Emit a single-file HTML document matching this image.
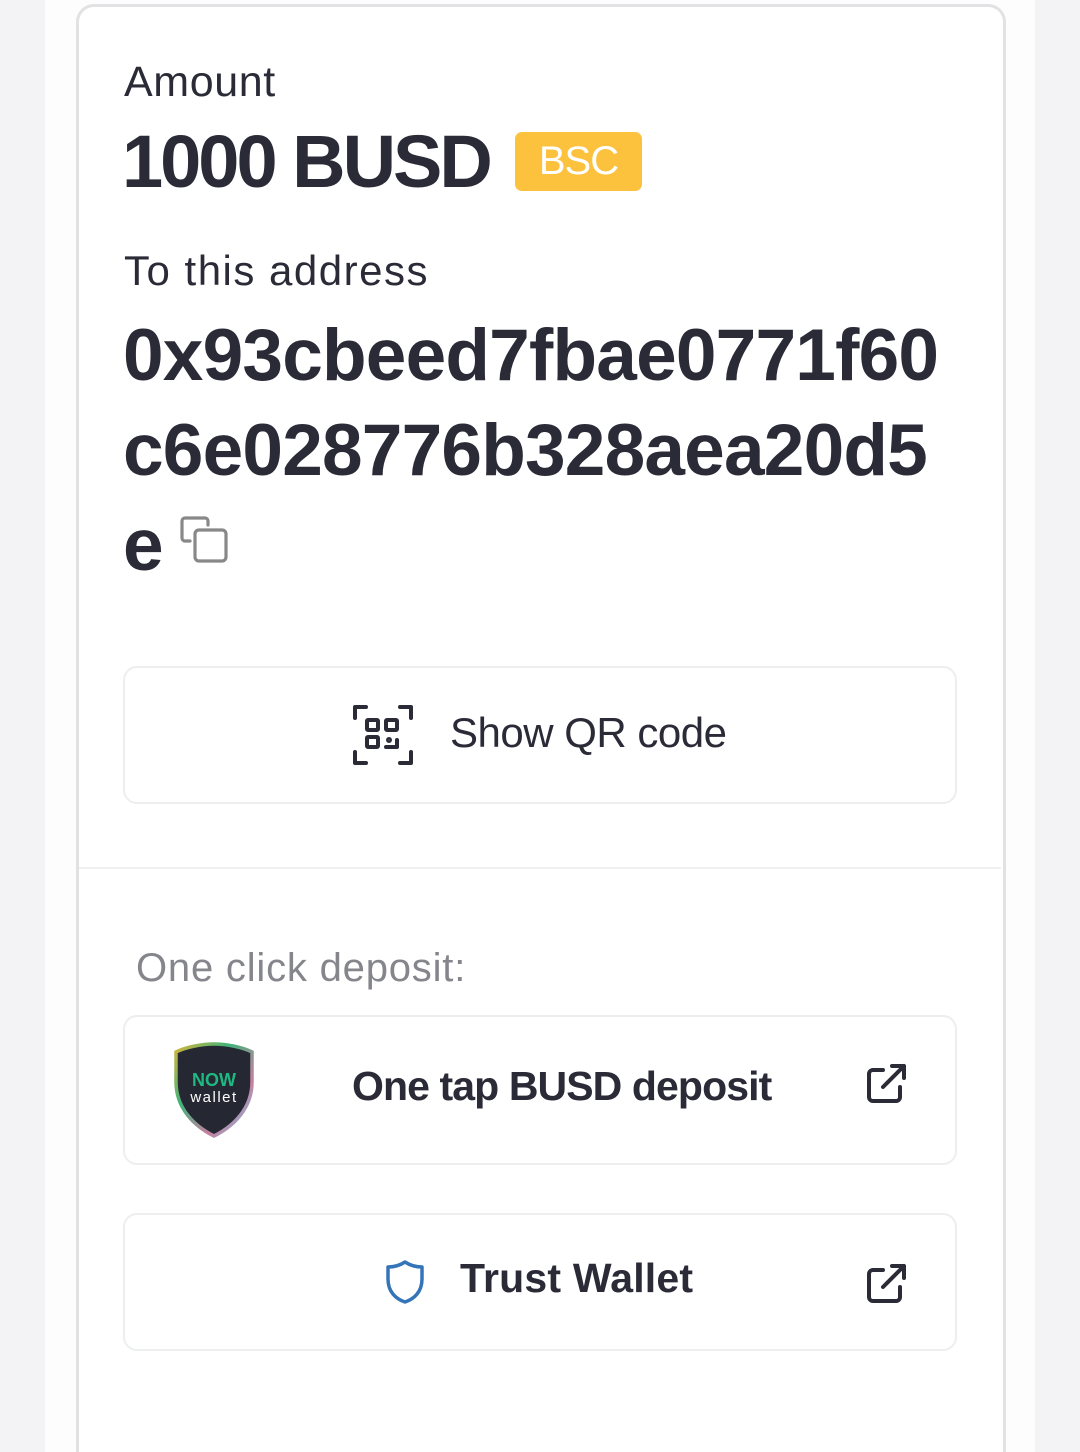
<!DOCTYPE html>
<html><head><meta charset="utf-8"><style>
html,body{margin:0;padding:0;overflow:hidden;height:1452px}
body{width:1080px;height:1452px;background:#f3f3f6;position:relative;overflow:hidden;font-family:"Liberation Sans",sans-serif;color:#2b2b38}
.col{position:absolute;left:45px;top:0;width:990px;height:1452px;background:#fdfdfd}
.card{position:absolute;left:76px;top:4px;width:924px;height:1470px;border:3px solid #e2e2e4;border-radius:18px;background:#fff}
.t{position:absolute;white-space:nowrap}
.btn{position:absolute;left:123px;width:830px;border:2px solid #eceeef;border-radius:14px;background:#fff}
</style></head><body>
<div class="col"></div>
<div class="card"></div>
<div class="t" style="left:124px;top:58px;font-size:43px;letter-spacing:0.6px">Amount</div>
<div class="t" style="left:122px;top:122px;font-size:74px;font-weight:bold;letter-spacing:-3px;line-height:80px">1000 BUSD</div>
<div class="t" style="left:515px;top:132px;width:127px;height:59px;background:#fcc13d;border-radius:7px;color:#fff;font-size:40px;line-height:59px;text-align:center;letter-spacing:-1px">BSC</div>
<div class="t" style="left:124px;top:247px;font-size:42px;letter-spacing:1.5px">To this address</div>
<div class="t" style="left:123px;top:308px;font-size:73px;font-weight:bold;letter-spacing:-0.8px;line-height:95px">0x93cbeed7fbae0771f60<br>c6e028776b328aea20d5<br>e</div>
<svg class="t" style="left:178px;top:515px" width="52" height="50" viewBox="0 0 52 50" fill="none" stroke="#888" stroke-width="3.2" stroke-linecap="round" stroke-linejoin="round">
<path d="M12 26H7a3 3 0 0 1-3-3V6a3 3 0 0 1 3-3h20a3 3 0 0 1 3 3v4"/>
<rect x="17" y="15" width="31" height="31" rx="4"/></svg>
<div class="btn" style="top:666px;height:134px"></div>
<svg class="t" style="left:352px;top:704px" width="62" height="62" viewBox="0 0 62 62" fill="none" stroke="#2b2b38" stroke-width="4" stroke-linecap="round" stroke-linejoin="round">
<path d="M3 14V3h11M48 3h11v11M3 48v11h11M59 48v11H48"/>
<rect x="15" y="16" width="11" height="10" rx="1"/><rect x="34" y="16" width="11" height="10" rx="1"/><rect x="15" y="33" width="11" height="10" rx="1"/>
<path d="M34 43h11V36"/><circle cx="37" cy="36" r="1" fill="#2b2b38"/></svg>
<div class="t" style="left:450px;top:709px;font-size:42px;letter-spacing:-0.5px">Show QR code</div>
<div style="position:absolute;left:79px;top:867px;width:922px;height:2px;background:#eeeff0"></div>
<div class="t" style="left:136px;top:946px;font-size:40px;color:#85858c;letter-spacing:0.8px">One click deposit:</div>
<div class="btn" style="top:1015px;height:146px"></div>
<svg class="t" style="left:172px;top:1042px" width="84" height="96" viewBox="0 0 84 96">
<defs><linearGradient id="g" x1="0" y1="0" x2="1" y2="1"><stop offset="0" stop-color="#d5b53a"/><stop offset=".35" stop-color="#3fb37a"/><stop offset=".7" stop-color="#c77fa0"/><stop offset="1" stop-color="#6ec4e0"/></linearGradient></defs>
<path d="M42 2C30 2 14 5 4 10v30c0 26 18 44 38 54 20-10 38-28 38-54V10C70 5 54 2 42 2z" fill="#252733" stroke="url(#g)" stroke-width="3.5"/>
<text x="42" y="44" text-anchor="middle" font-family="Liberation Sans,sans-serif" font-weight="bold" font-size="18" fill="#1eb980">NOW</text>
<text x="42" y="60" text-anchor="middle" font-family="Liberation Sans,sans-serif" font-size="15" fill="#fff" letter-spacing="1.5">wallet</text></svg>
<div class="t" style="left:352px;top:1063px;font-size:41px;font-weight:bold;color:#2b2b38;letter-spacing:-0.9px">One tap BUSD deposit</div>
<svg class="t" style="left:866px;top:1062px" width="42" height="42" viewBox="0 0 42 42" fill="none" stroke="#2b2b38" stroke-width="4" stroke-linecap="round" stroke-linejoin="round">
<path d="M17 8H7a4 4 0 0 0-4 4v23a4 4 0 0 0 4 4h23a4 4 0 0 0 4-4V25"/><path d="M17 25L38 4M26 4h12v12"/></svg>
<div class="btn" style="top:1213px;height:134px"></div>
<svg class="t" style="left:384px;top:1259px" width="42" height="46" viewBox="0 0 42 46" fill="none" stroke="#3474b8" stroke-width="3.5" stroke-linejoin="round">
<path d="M21 3C15 7 10 8 4 8v12c0 13 8 20 17 23 9-3 17-10 17-23V8c-6 0-11-1-17-5z"/></svg>
<div class="t" style="left:460px;top:1255px;font-size:41px;font-weight:bold;color:#2b2b38;letter-spacing:0.2px">Trust Wallet</div>
<svg class="t" style="left:866px;top:1262px" width="42" height="42" viewBox="0 0 42 42" fill="none" stroke="#2b2b38" stroke-width="4" stroke-linecap="round" stroke-linejoin="round">
<path d="M17 8H7a4 4 0 0 0-4 4v23a4 4 0 0 0 4 4h23a4 4 0 0 0 4-4V25"/><path d="M17 25L38 4M26 4h12v12"/></svg>
</body></html>
